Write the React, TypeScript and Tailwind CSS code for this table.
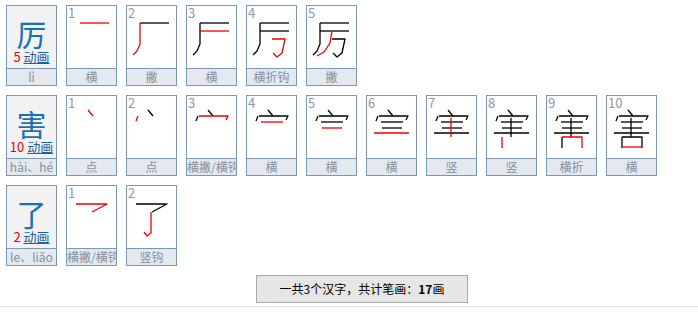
import React from "react";

type Pt = [number, number];
type Stroke = Pt[];

const LI: Stroke[] = [
  [[13, 17], [42, 17]],
  [[13, 17], [13, 38], [10, 45], [6, 49]],
  [[13, 25], [42, 25]],
  [[25, 33], [38, 33], [35, 47], [30, 51], [26, 47]],
  [[25, 25], [23, 37], [17, 46], [10, 50]],
];

const HAI: Stroke[] = [
  [[21, 14], [26, 20]],
  [[11, 20], [9, 25]],
  [[12, 20], [41, 20], [39, 24]],
  [[14, 26], [36, 26]],
  [[15, 32], [35, 32]],
  [[7, 37], [42, 37]],
  [[24, 22], [24, 41]],
  [[15, 41], [15, 52]],
  [[15, 41], [35, 41], [35, 52]],
  [[16, 51], [35, 51]],
];

const LIAO: Stroke[] = [
  [[9, 18], [40, 18], [25, 26]],
  [[24, 26], [24, 47], [20, 50], [17, 46]],
];

const chars = [
  { ch: "厉", count: 5, py: "lì", strokes: LI, names: ["横", "撇", "横", "横折钩", "撇"] },
  {
    ch: "害",
    count: 10,
    py: "hài、hé",
    strokes: HAI,
    names: ["点", "点", "横撇/横钩", "横", "横", "横", "竖", "竖", "横折", "横"],
  },
  { ch: "了", count: 2, py: "le、liǎo", strokes: LIAO, names: ["横撇/横钩", "竖钩"] },
];

function Cell({ label, top, gray }: { label: string; top: React.ReactNode; gray?: boolean }) {
  return (
    <div className="w-[51px] h-[81px] border border-[#7b98b6] flex flex-col shrink-0">
      <div className={`relative h-[62px] ${gray ? "bg-[#f2f2f2]" : "bg-white"}`}>{top}</div>
      <div className="h-[17px] border-t border-[#7b98b6] bg-[#e3e9ef] text-[12px] leading-[16px] text-center text-[#87919c] whitespace-nowrap overflow-hidden">
        {label}
      </div>
    </div>
  );
}

function StrokeImage({ strokes, step }: { strokes: Stroke[]; step: number }) {
  return (
    <>
      <span className="absolute left-[1px] top-[-1px] text-[13px] leading-[15px] text-[#8e98aa]">{step}</span>
      <svg width="49" height="62" viewBox="0 0 49 62" className="absolute left-0 top-0">
        {strokes.slice(0, step).map((s, i) => (
          <polyline
            key={i}
            points={s.map((p) => p.join(",")).join(" ")}
            fill="none"
            stroke={i === step - 1 ? "#ee0000" : "#000000"}
            strokeWidth="1.3"
            strokeLinejoin="round"
          />
        ))}
      </svg>
    </>
  );
}

export default function App() {
  return (
    <div className="w-[698px] h-[321px] bg-white font-['Noto_Sans_CJK_SC','Noto_Sans',sans-serif]">
      <div className="pt-[5px] pl-[6px] flex flex-col gap-[9px]">
        {chars.map((c) => (
          <div key={c.ch} className="flex gap-[9px]">
            <Cell
              gray
              label={c.py}
              top={
                <div className="flex flex-col items-center pt-[11px]">
                  <span className="text-[30px] leading-[32px] text-[#1a6fb8]">{c.ch}</span>
                  <span className="text-[13px] leading-[15px] whitespace-nowrap">
                    <span className="text-[#ee0000]">{c.count}</span>{" "}
                    <span className="text-[#1d5fa6] underline">动画</span>
                  </span>
                </div>
              }
            />
            {c.names.map((n, i) => (
              <Cell key={i} label={n} top={<StrokeImage strokes={c.strokes} step={i + 1} />} />
            ))}
          </div>
        ))}
      </div>
      <div className="mt-[9px] border-b border-[#dddddd] pb-[3px]">
        <div className="ml-[256px] w-[212px] h-[28px] border border-[#a9a9a9] bg-[#e6e6e6] flex items-center justify-center text-[12px] text-black">
          一共3个汉字，共计笔画：<b>17</b>画
        </div>
      </div>
    </div>
  );
}
